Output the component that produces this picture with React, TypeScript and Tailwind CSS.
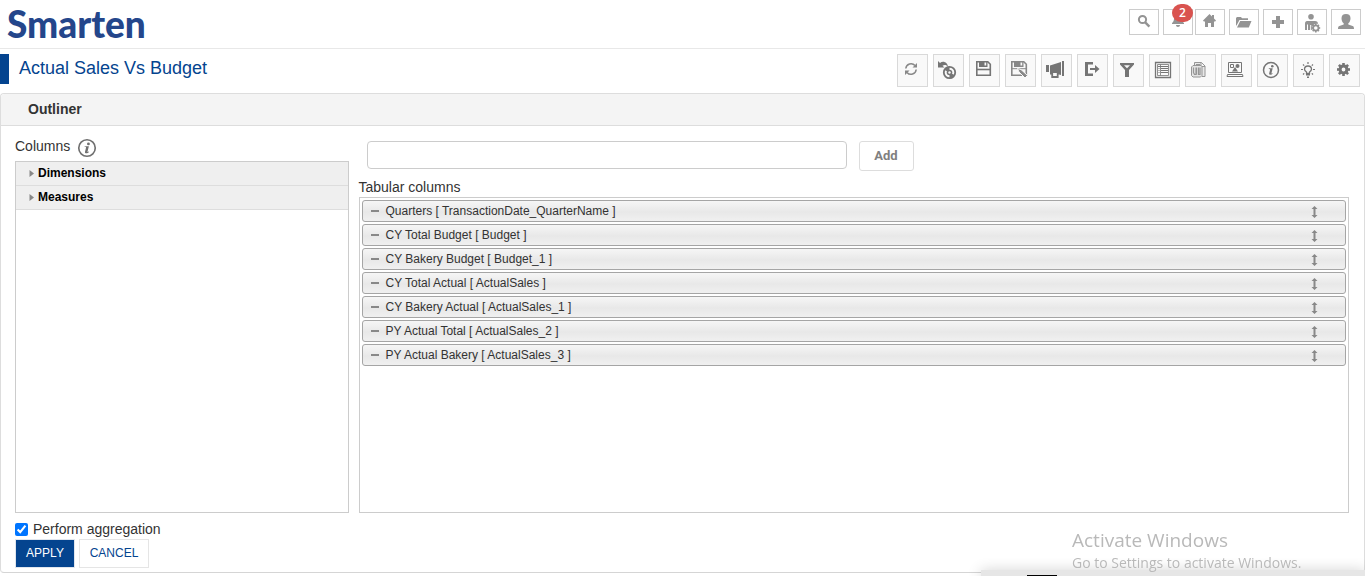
import { ReactNode, useState } from 'react';

type IconButton = { label: string; icon: ReactNode };

const GEAR_TEETH = [0, 45, 90, 135, 180, 225, 270, 315];

const accountButtons: (IconButton & { badge?: number })[] = [
  {
    label: 'Search',
    icon: (
      <g fill="none" stroke="currentColor" strokeWidth="2">
        <circle cx="10.5" cy="9.5" r="3.6" />
        <path d="M13 12.2l4.4 4.4" strokeWidth="2.4" />
      </g>
    ),
  },
  {
    label: 'Notifications',
    badge: 2,
    icon: <path d="M12 4c-3 0-4 2-4 4.5 0 2.500-.7 3.500-2 4.500v1h12v-1c-1.300-1-2-2-2-4.500C16 6 15 4 12 4zM10 15h4c0 1.200-.8 2-2 2s-2-.8-2-2z" />,
  },
  {
    label: 'Home',
    icon: <path d="M11.500 4L5 10.500l.8.9h1.200V17h3v-4h3v4h3v-5.600h1.200l.8-.9-2-2V5h-2v1.500z" />,
  },
  {
    label: 'Open folder',
    icon: <path d="M4 15.500V8l1-1h4l1 1.200h6V10H7.500L4.500 15.500zM8.200 11H19.500l-2.700 6.500H5z" />,
  },
  { label: 'New', icon: <path d="M10 6h4v4h4v4h-4v4h-4v-4H6v-4h4z" /> },
  {
    label: 'User settings',
    icon: (
      <>
        <circle cx="11" cy="6.800" r="2.800" />
        <path d="M7 11h8c2 0 3 1.200 3 3-3-.8-6 1-6 4.500V20h-.8v-5h-1v5H8v-5.500H7V20H5v-6.500C5 12 5.800 11 7 11z" />
        <circle cx="15.800" cy="18" r="2.700" fill="none" stroke="currentColor" strokeWidth="1.800" />
        {GEAR_TEETH.map((a) => (
          <path key={a} d="M15 13.600h1.600v1.800H15z" transform={`rotate(${a} 15.8 18)`} />
        ))}
      </>
    ),
  },
  {
    label: 'Profile',
    icon: <path d="M12 4c3 0 4.500 1.600 4.500 4.200 0 2.300-.8 4-2.200 5.100v1.200l4.300 1.500c1 .4 1.400 1 1.400 3H4c0-2 .4-2.600 1.400-3l4.300-1.500v-1.200C8.300 12.200 7.500 10.500 7.500 8.200 7.500 5.600 9 4 12 4z" />,
  },
];

const reportButtons: IconButton[] = [
  {
    label: 'Refresh',
    icon: (
      <g opacity="0.850">
        <path d="M5.800 10.500A5.200 5.200 0 0 1 15 7.600M16.200 11.500A5.200 5.200 0 0 1 7 14.400" fill="none" stroke="currentColor" strokeWidth="1.500" />
        <path d="M17 5v4.500h-4.500zM5 17v-4.500h4.500z" />
      </g>
    ),
  },
  {
    label: 'Refresh data',
    icon: (
      <>
        <path d="M2 3v6.500h6.500L6.500 7.800C8.500 6.500 10.500 6.800 12 9 12 4.500 7 2 4 5z" />
        <circle cx="13.500" cy="14.500" r="5.700" fill="#f9f9f9" stroke="currentColor" strokeWidth="1.800" />
        <path d="M13.500 14.500L8.500 12a5.500 5.500 0 0 1 5-3.500zM13.500 14.500l5 2.500a5.500 5.500 0 0 1-5 3.500z" />
        <circle cx="13.500" cy="14.500" r="2.800" />
        <circle cx="13.500" cy="14.500" r="1.200" fill="#f9f9f9" />
      </>
    ),
  },
  {
    label: 'Save',
    icon: (
      <>
        <path d="M4.800 3.800h11l2.500 2.500v11H4.800z" fill="#f9f9f9" stroke="currentColor" strokeWidth="1.600" />
        <path d="M7 3h8.500v6H7z" />
        <path d="M12.500 4.500h1.700v3h-1.700z" fill="#f9f9f9" />
        <path d="M5 11.500h13" stroke="currentColor" strokeWidth="1.600" />
      </>
    ),
  },
  {
    label: 'Save as',
    icon: (
      <g opacity="0.850">
        <path d="M3.800 3.800h12l2.500 2.500v11H3.800z" fill="#f9f9f9" stroke="currentColor" strokeWidth="1.600" />
        <path d="M6 3h9.500v6H6z" />
        <path d="M12.500 4.500h1.700v3h-1.700z" fill="#f9f9f9" />
        <path d="M4 10.700h14" stroke="currentColor" />
        <path d="M9.500 10.500l3.500 1 6.500 6-2.500 2.500-6-6z" stroke="#f9f9f9" />
      </g>
    ),
  },
  {
    label: 'Announce',
    icon: (
      <>
        <path d="M2 7h3v7H2zM6 7.500L17 4v13l-2-.5H6zM18 3h2v15h-2z" />
        <path d="M8.200 14v5h5.500v-5z" fill="#f9f9f9" stroke="currentColor" strokeWidth="1.800" />
      </>
    ),
  },
  {
    label: 'Export',
    icon: <path d="M5 4h8v2.500H8v9h5V18H5zM10 10h5V7l4.500 4-4.500 4v-3h-5z" />,
  },
  { label: 'Filter', icon: <path d="M4 5h14v1.500L13 12v7H9v-7L4 6.500zM8 7.200l3 3 3-3z" fillRule="evenodd" /> },
  {
    label: 'List',
    icon: (
      <g fill="none" stroke="currentColor">
        <path d="M3.500 4.500h15v15h-15z" strokeWidth="1.300" />
        <path d="M5.500 6.500h11v11h-11zM8.500 6.500v11" strokeWidth="1" opacity="0.800" />
        <path d="M6 8.500h10M9 10.500h7M9 12.500h7M9 14.500h7" strokeWidth="1" />
        <path d="M6 10.500h2M6 12.500h2M6 14.500h2" strokeWidth="1" opacity="0.500" />
      </g>
    ),
  },
  {
    label: 'Document',
    icon: (
      <g fill="none" stroke="currentColor" opacity="0.750">
        <path d="M6.500 7V4.500h7l3.500 3.500v10.500h-3M13 4.500V8.500h4M8 6.500h4" fill="#e3e3e3" />
        <path d="M3.500 9l1.500-1.500h8l1 1v9L12.500 19H5l-1.500-1.500z" fill="#ddd" />
        <path d="M5.500 9.500v5l1 2h1.500V9.500M8.500 16.500V9.500M10.500 9.500v7H12V9.500" strokeWidth="1.200" />
      </g>
    ),
  },
  {
    label: 'Presentation',
    icon: (
      <>
        <path d="M4.500 4.500h13v10h-13zM3.500 16.500h15l.5 2H3z" fill="none" stroke="currentColor" />
        <path d="M6.500 6.500h3v3h-3z" fill="none" stroke="currentColor" />
        <circle cx="13.500" cy="8" r="2" />
        <path d="M11 9l3 4.500H8z" />
      </>
    ),
  },
  { label: 'Information', icon: <InfoGlyph /> },
  {
    label: 'Insights',
    icon: (
      <>
        <path d="M10.500 15.500v-1.500c-1.500-1-2-1.800-2-2.700 0-2.300 1.800-3.300 3.500-3.300s3.500 1 3.500 3.300c0 .9-.5 1.700-2 2.700v1.500z" fill="none" stroke="currentColor" strokeWidth="1.300" />
        <path d="M10 16h4v1.500h-4zM11 18.500h2V20h-2z" />
        <path d="M12 4v2M7 6.500l1.200 1.200M17 6.500l-1.200 1.200M5 11.500h2M17 11.500h2M7 16.500l1.200-1.200M17 16.500l-1.200-1.200" stroke="currentColor" strokeWidth="1.200" />
      </>
    ),
  },
  {
    label: 'Settings',
    icon: (
      <>
        <circle cx="11.500" cy="11.500" r="3.400" fill="none" stroke="currentColor" strokeWidth="3" />
        {GEAR_TEETH.map((a) => (
          <path key={a} d="M10.200 5h2.600v3h-2.600z" transform={`rotate(${a} 11.5 11.5)`} />
        ))}
      </>
    ),
  },
];

const fieldGroups = ['Dimensions', 'Measures'];

const initialColumns = [
  { name: 'Quarters', field: 'TransactionDate_QuarterName' },
  { name: 'CY Total Budget', field: 'Budget' },
  { name: 'CY Bakery Budget', field: 'Budget_1' },
  { name: 'CY Total Actual', field: 'ActualSales' },
  { name: 'CY Bakery Actual', field: 'ActualSales_1' },
  { name: 'PY Actual Total', field: 'ActualSales_2' },
  { name: 'PY Actual Bakery', field: 'ActualSales_3' },
];

function InfoGlyph() {
  return (
    <>
      <circle cx="11" cy="12" r="7.500" fill="none" stroke="currentColor" strokeWidth="1.500" />
      <circle cx="12.300" cy="8.300" r="1.300" />
      <path d="M8.800 10.300h3.900l-1.200 4.800c-.1.600.3.700 1.100.1l.3.400c-1.600 1.800-4.200 1.600-3.700-.3l.9-3.500c.1-.6-.3-.8-1.300-.9z" />
    </>
  );
}

function Header() {
  return (
    <header className="flex h-[49px] items-start justify-between border-b border-[#e8e8e8] pr-1 pl-[7px]">
      <a href="#" className="font-[Lato,sans-serif] text-[37px] leading-[48px] font-black text-[#24468b]">
        Smarten
      </a>
      <nav className="flex gap-1 pt-[9px]">
        {accountButtons.map((b) => (
          <button
            key={b.label}
            aria-label={b.label}
            className={`relative flex h-[26px] w-[30px] items-center justify-center border border-[#ccc] text-[#949494] ${b.badge ? '-mr-0.5' : ''}`}
          >
            <svg className="size-6" viewBox="0 0 24 24" fill="currentColor">{b.icon}</svg>
            {b.badge && (
              <span className="absolute -top-1.5 left-2 h-[18px] w-[21px] rounded-full bg-[#d9534f] text-center font-['Open_Sans',sans-serif] text-xs leading-[18px] font-semibold text-white">
                {b.badge}
              </span>
            )}
          </button>
        ))}
      </nav>
    </header>
  );
}

function TitleBar() {
  return (
    <div className="flex h-11 items-start justify-between pt-[5px] pr-[5px]">
      <h1 className="h-[30px] border-l-[9px] border-[#04448f] pl-2.5 text-lg leading-[28px] text-[#04448f]">
        Actual Sales Vs Budget
      </h1>
      <div className="flex gap-[5px]">
        {reportButtons.map((b) => (
          <button
            key={b.label}
            aria-label={b.label}
            className="flex h-[33px] w-[31px] items-center justify-center border border-[#d9d9d9] bg-[#f9f9f9] text-[#757575]"
          >
            <svg className="size-[25px]" viewBox="0 0 25 25" fill="currentColor">{b.icon}</svg>
          </button>
        ))}
      </div>
    </div>
  );
}

function ColumnRow({ name, field, onRemove }: { name: string; field: string; onRemove: () => void }) {
  return (
    <li className="flex h-[22px] items-center rounded-[3px] border border-[#a5a5a5] bg-linear-to-b from-[#f6f6f6] from-0% via-[#e8e8e8] via-55% to-[#f0f0f0] pr-[27px] pl-2 text-xs text-[#333]">
      <button aria-label={`Remove ${name}`} onClick={onRemove} className="mr-[7px] flex h-4 w-2 items-center">
        <span className="h-0.5 w-full bg-[#888]" />
      </button>
      <span className="flex-1">{name} [ {field} ]</span>
      <svg className="mt-0.5 h-3 w-[7px] text-[#888]" viewBox="0 0 7 12" fill="currentColor">
        <path d="M3.500 0L6.500 3H4.500v6h2l-3 3-3-3h2V3h-2z" />
      </svg>
    </li>
  );
}

export default function App() {
  const [columns, setColumns] = useState(initialColumns);
  const [newColumn, setNewColumn] = useState('');
  const [aggregate, setAggregate] = useState(true);

  const addColumn = () => {
    if (!newColumn) return;
    setColumns((c) => [...c, { name: newColumn, field: newColumn }]);
    setNewColumn('');
  };

  const removeColumn = (field: string) => {
    setColumns((c) => c.filter((col) => col.field !== field));
  };

  return (
    <div className="min-h-screen overflow-hidden bg-white font-['Liberation_Sans',Arial,sans-serif] text-sm text-[#333]">
      <Header />
      <TitleBar />
      <section className="rounded-[4px] border border-[#ddd] border-b-[#d5d5d5]">
        <h2 className="h-8 rounded-t-[4px] border-b border-[#ddd] bg-[#f4f4f4] pl-[27px] leading-[30px] font-bold">
          Outliner
        </h2>
        <div className="flex gap-2.5 px-3.5 pr-[15px] pt-[11px]">
          <div className="flex w-1/4 flex-col">
            <div className="flex h-6 items-start gap-1.5">
              <span className="leading-[18px]">Columns</span>
              <svg className="size-[22px] text-[#707070]" viewBox="1 2 20 20" fill="currentColor">
                <InfoGlyph />
              </svg>
            </div>
            <ul className="h-[352px] border border-[#ccc] text-xs font-bold text-black">
              {fieldGroups.map((g) => (
                <li key={g} className="h-6 border-b border-[#ddd] bg-[#efefef]">
                  <button className="flex h-[22px] w-full items-center gap-1 pl-[13px]">
                    <svg className="h-[7px] w-[5px] text-[#888]" viewBox="0 0 5 7" fill="currentColor">
                      <path d="M0.500 0L5 3.500l-4.500 3.500z" />
                    </svg>
                    {g}
                  </button>
                </li>
              ))}
            </ul>
          </div>
          <div className="flex flex-1 flex-col">
            <div className="flex items-start gap-3 pt-1 pl-2">
              <input
                aria-label="New column"
                value={newColumn}
                onChange={(e) => setNewColumn(e.target.value)}
                className="h-7 w-[480px] rounded-[4px] border border-[#ccc] px-2"
              />
              <button
                onClick={addColumn}
                className="h-[30px] w-[55px] rounded-[3px] border border-[#ddd] font-[Roboto,sans-serif] text-[13px] font-bold text-[#808080]"
              >
                Add
              </button>
            </div>
            <h3 className="pt-1.5 leading-5">Tabular columns</h3>
            <ul className="flex flex-1 flex-col gap-0.5 border border-[#ccc] p-0.5">
              {columns.map((c) => (
                <ColumnRow key={c.field} {...c} onRemove={() => removeColumn(c.field)} />
              ))}
            </ul>
          </div>
        </div>
        <div className="px-3.5 pt-1.5 pb-1">
          <label className="flex h-5 items-center gap-[5px]">
            <input
              type="checkbox"
              checked={aggregate}
              onChange={(e) => setAggregate(e.target.checked)}
              className="size-[13px] accent-[#0075ff]"
            />
            Perform aggregation
          </label>
          <div className="flex gap-1 text-xs">
            <button className="h-[29px] w-[60px] border border-[#e0e6ee] bg-[#04448f] pb-0.5 text-white">APPLY</button>
            <button className="h-[29px] w-[70px] border border-[#e5e5e5] pb-0.5 text-[#04448f]">CANCEL</button>
          </div>
        </div>
      </section>

      {/* desktop overlay */}
      <div className="pointer-events-none fixed right-0 bottom-0 w-[384px]">
        <div className="absolute right-0 bottom-0 h-1.5 w-full bg-[#e6e6e6] shadow-[0_2px_14px_rgba(0,0,0,0.3)]">
          <div className="absolute bottom-0 left-[46px] h-px w-[30px] bg-black" />
        </div>
        <div className="relative pb-0.5 pl-[91px] font-['Open_Sans',sans-serif] text-[#b9b9b9]">
          <p className="text-[19px] leading-6">Activate Windows</p>
          <p className="text-sm leading-[22px]">Go to Settings to activate Windows.</p>
        </div>
      </div>
    </div>
  );
}
